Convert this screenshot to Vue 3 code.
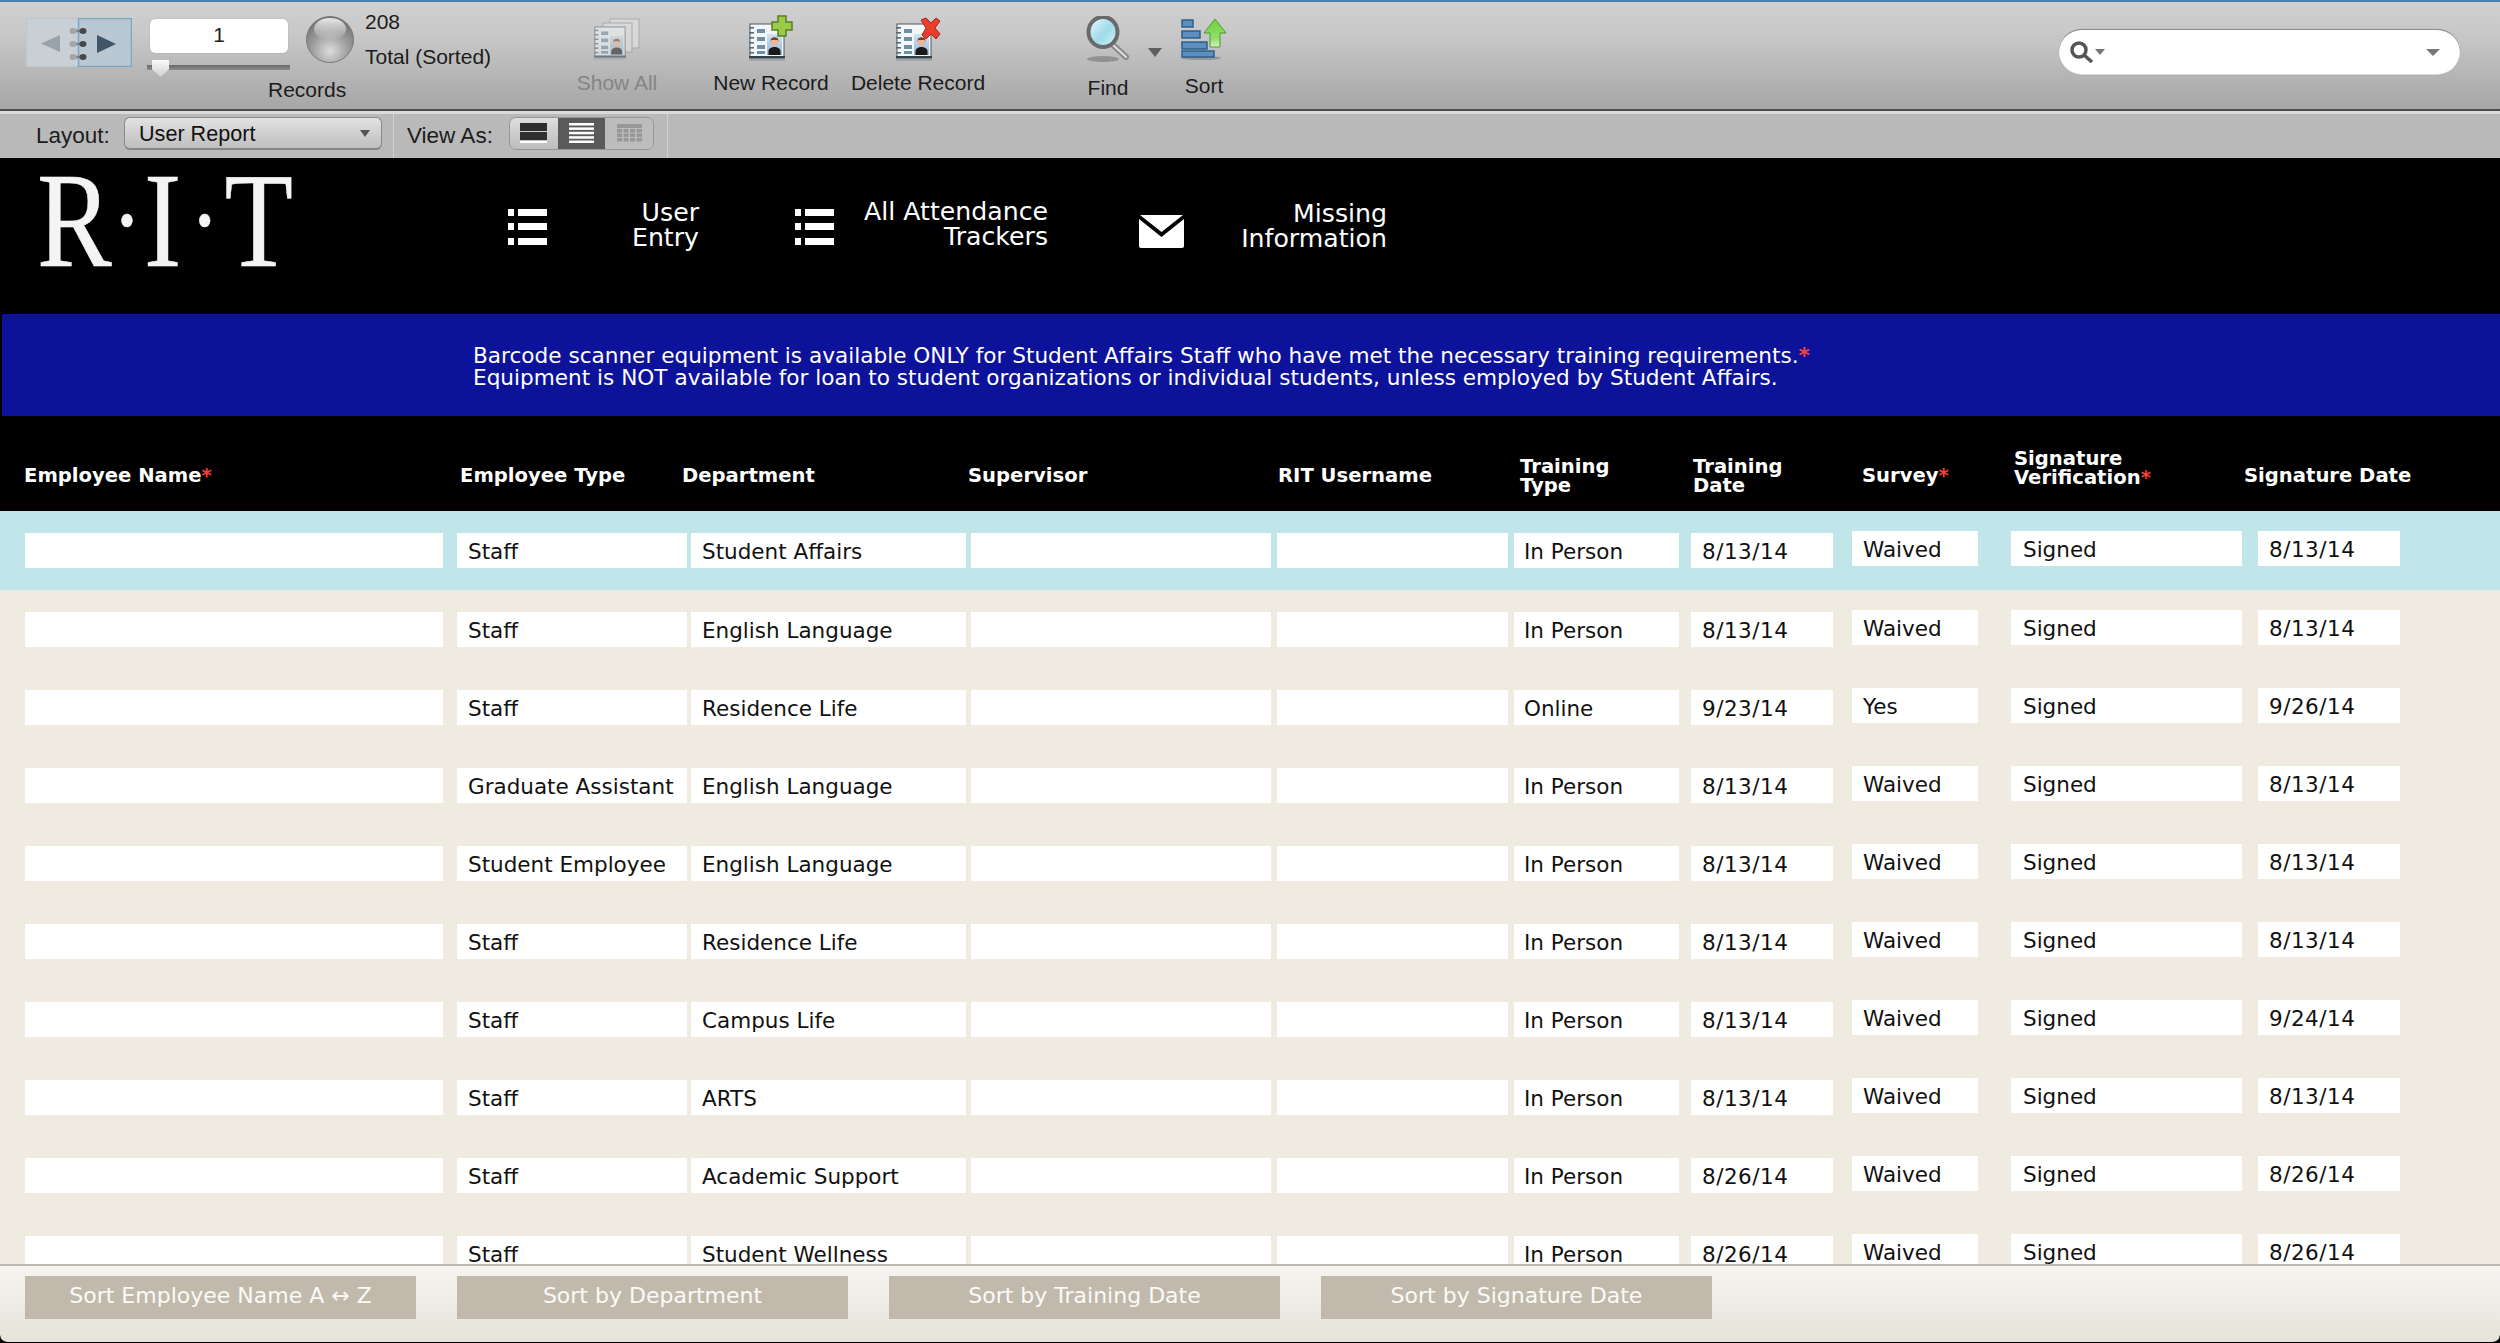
<script setup>
const headers = [
  { text: 'Employee Name', star: true, cls: 'h-one h-1' },
  { text: 'Employee Type', cls: 'h-one h-2' },
  { text: 'Department', cls: 'h-one h-3' },
  { text: 'Supervisor', cls: 'h-one h-4' },
  { text: 'RIT Username', cls: 'h-one h-5' },
  { text: 'Training Type', cls: 'h-two h-6' },
  { text: 'Training Date', cls: 'h-two h-7' },
  { text: 'Survey', star: true, cls: 'h-one h-8' },
  { text: 'Signature Verification', star: true, cls: 'h-top h-9' },
  { text: 'Signature Date', cls: 'h-one h-10' }
]

const rows = [
  ['Staff', 'Student Affairs', 'In Person', '8/13/14', 'Waived', 'Signed', '8/13/14'],
  ['Staff', 'English Language', 'In Person', '8/13/14', 'Waived', 'Signed', '8/13/14'],
  ['Staff', 'Residence Life', 'Online', '9/23/14', 'Yes', 'Signed', '9/26/14'],
  ['Graduate Assistant', 'English Language', 'In Person', '8/13/14', 'Waived', 'Signed', '8/13/14'],
  ['Student Employee', 'English Language', 'In Person', '8/13/14', 'Waived', 'Signed', '8/13/14'],
  ['Staff', 'Residence Life', 'In Person', '8/13/14', 'Waived', 'Signed', '8/13/14'],
  ['Staff', 'Campus Life', 'In Person', '8/13/14', 'Waived', 'Signed', '9/24/14'],
  ['Staff', 'ARTS', 'In Person', '8/13/14', 'Waived', 'Signed', '8/13/14'],
  ['Staff', 'Academic Support', 'In Person', '8/26/14', 'Waived', 'Signed', '8/26/14'],
  ['Staff', 'Student Wellness', 'In Person', '8/26/14', 'Waived', 'Signed', '8/26/14']
]

const sorts = ['Sort Employee Name A ↔ Z', 'Sort by Department', 'Sort by Training Date', 'Sort by Signature Date']
</script>

<template>
  <div class="app">
    <svg class="defs" width="0" height="0">
      <defs>
        <linearGradient id="photo" x1="0" y1="0" x2="0" y2="1">
          <stop offset="0" stop-color="#cfe3f2" />
          <stop offset="1" stop-color="#8fbbdc" />
        </linearGradient>
        <linearGradient id="lens" x1="0" y1="0" x2="1" y2="1">
          <stop offset="0" stop-color="#e8fbff" />
          <stop offset=".55" stop-color="#9fdbe8" />
          <stop offset="1" stop-color="#d9f4f8" />
        </linearGradient>
        <radialGradient id="ball" cx=".5" cy=".75" r=".75">
          <stop offset="0" stop-color="#dcdcdc" />
          <stop offset=".55" stop-color="#9a9a9a" />
          <stop offset="1" stop-color="#6e6e6e" />
        </radialGradient>
        <linearGradient id="ballTop" x1="0" y1="0" x2="0" y2="1">
          <stop offset="0" stop-color="#ffffff" stop-opacity=".85" />
          <stop offset="1" stop-color="#ffffff" stop-opacity="0" />
        </linearGradient>
        <linearGradient id="upArrow" x1="0" y1="0" x2="0" y2="1">
          <stop offset="0" stop-color="#6fd13a" />
          <stop offset=".7" stop-color="#8fe06a" />
          <stop offset="1" stop-color="#d8f0c8" />
        </linearGradient>
        <symbol id="card" viewBox="0 0 36 38">
          <rect x="0" y="34" width="36" height="4" fill="#8e9498" opacity=".55" />
          <rect x="1" y="1" width="34" height="34" fill="#f4f6f7" stroke="#4c5a64" stroke-width="1" />
          <rect x="0" y="33" width="36" height="2" fill="#34424c" />
          <g fill="#6d8fa8">
            <rect x="8" y="6" width="8" height="4" />
            <rect x="8" y="14" width="8" height="4" />
            <rect x="8" y="22" width="8" height="4" />
            <rect x="8" y="28" width="8" height="3" />
          </g>
          <g fill="#5a6a74">
            <rect x="0" y="4" width="5" height="1.6" />
            <rect x="0" y="9" width="5" height="1.6" />
            <rect x="0" y="14" width="5" height="1.6" />
            <rect x="0" y="19" width="5" height="1.6" />
            <rect x="0" y="24" width="5" height="1.6" />
            <rect x="0" y="29" width="5" height="1.6" />
          </g>
          <rect x="18" y="11" width="15" height="21" fill="url(#photo)" />
          <circle cx="25.5" cy="19" r="4" fill="#e9b79a" />
          <path d="M21.5 18.5a4 4.2 0 0 1 8 0l-1-1.5h-6z" fill="#8a3b1c" />
          <path d="M19.5 32v-3.5c0-3 3-4.5 6-4.500s6 1.500 6 4.500V32z" fill="#1a1a1a" />
        </symbol>
      </defs>
    </svg>

    <header class="topline"></header>
    <section class="toolbar">
      <svg class="book" width="106" height="49" viewBox="0 0 106 49">
        <rect x=".5" y=".5" width="52" height="48" fill="#c8d0d5" stroke="#bcc7ce" />
        <rect x="52.500" y=".5" width="53" height="48" fill="#b8c7d2" stroke="#7ba6c6" stroke-width="1.500" />
        <path d="M34 17v17L15 25.500z" fill="#98a2a8" />
        <path d="M71 17v18L90 26z" fill="#3f5568" />
        <g>
          <g stroke="#7d8184" stroke-width="2.500">
            <path d="M47 13h9M47 26h9M47 39h9" />
          </g>
          <g fill="#a2a6a8">
            <ellipse cx="47" cy="13" rx="3.500" ry="3" />
            <ellipse cx="47" cy="26" rx="3.500" ry="3" />
            <ellipse cx="47" cy="39" rx="3.500" ry="3" />
          </g>
          <g fill="#45494c">
            <ellipse cx="57" cy="13" rx="3.500" ry="3" />
            <ellipse cx="57" cy="26" rx="3.500" ry="3" />
            <ellipse cx="57" cy="39" rx="3.500" ry="3" />
          </g>
        </g>
      </svg>

      <div class="records">
        <div class="rec-top">
          <div class="rec-left">
            <div class="rec-input">1</div>
            <div class="slider"><span class="thumb"></span></div>
          </div>
          <svg class="pie" width="48" height="47" viewBox="0 0 48 47">
            <ellipse cx="24" cy="23.500" rx="23.500" ry="23" fill="url(#ball)" stroke="#7a7a7a" />
            <ellipse cx="24" cy="13" rx="16" ry="11" fill="url(#ballTop)" />
          </svg>
          <div class="counts">
            <div>208</div>
            <div class="total">Total (Sorted)</div>
          </div>
        </div>
        <div class="rec-label">Records</div>
      </div>

      <div class="tool tool-showall">
        <svg class="icon" width="46" height="42" viewBox="0 0 46 42">
          <g opacity=".55">
            <rect x="16" y="1" width="29" height="29" fill="#e6e6e6" stroke="#8d9498" />
            <rect x="9" y="5" width="29" height="29" fill="#e6e6e6" stroke="#8d9498" />
            <use href="#card" x="0" y="8" width="32" height="34" />
          </g>
        </svg>
        <span class="label off">Show All</span>
      </div>

      <div class="tool tool-new">
        <svg class="icon" width="44" height="46" viewBox="0 0 44 46">
          <use href="#card" x="0" y="8" width="36" height="38" />
          <path d="M29 1h8v6h6v8h-6v6h-8v-6h-6V7h6z" fill="#9ccb4a" stroke="#55801f" stroke-width="1.500" />
        </svg>
        <span class="label">New Record</span>
      </div>

      <div class="tool tool-delete">
        <svg class="icon" width="45" height="44" viewBox="0 0 45 44">
          <use href="#card" x="0" y="6" width="36" height="38" />
          <path d="M25 3l5-2 5 5 5-5 4 3-5 7 5 6-4 5-5-5-5 5-4-4 4-7z" fill="#ea3d2e" stroke="#a9261b" stroke-width="1" />
        </svg>
        <span class="label">Delete Record</span>
      </div>

      <div class="tool tool-find">
        <svg class="icon" width="44" height="46" viewBox="0 0 44 46">
          <ellipse cx="17" cy="43" rx="16" ry="3" fill="#6e6e6e" opacity=".55" />
          <path d="M26 28l14 13" stroke="#8a8a8a" stroke-width="6" stroke-linecap="round" />
          <path d="M26 28l14 13" stroke="#dedede" stroke-width="2" stroke-linecap="round" />
          <ellipse cx="17" cy="16" rx="14.500" ry="15" fill="url(#lens)" stroke="#6a6a6a" stroke-width="4" />
        </svg>
        <span class="label">Find</span>
      </div>
      <span class="find-arrow"></span>

      <div class="tool tool-sort">
        <svg class="icon" width="46" height="42" viewBox="0 0 46 42">
          <ellipse cx="20" cy="40" rx="20" ry="2" fill="#6e6e6e" opacity=".5" />
          <g fill="#5b8fbf" stroke="#2c5f8c" stroke-width="1.500">
            <rect x="1" y="2" width="11" height="7" />
            <rect x="1" y="13" width="18" height="7" />
            <rect x="1" y="24" width="25" height="7" />
            <rect x="1" y="33" width="32" height="6" />
          </g>
          <path d="M34 1l11 14h-6v14h-10V15h-6z" fill="url(#upArrow)" stroke="#4f9a2a" stroke-width="1" />
        </svg>
        <span class="label">Sort</span>
      </div>

      <div class="search">
        <svg width="36" height="22" viewBox="0 0 36 22">
          <circle cx="9" cy="9" r="7" fill="none" stroke="#555" stroke-width="3.500" />
          <path d="M14 14l8 7" stroke="#555" stroke-width="3.500" />
          <path d="M25 8h10l-5 6z" fill="#777" />
        </svg>
        <span class="search-arrow"></span>
      </div>
    </section>

    <section class="layoutbar">
      <div class="lay-group">
        <span class="lay-label">Layout:</span>
        <div class="select">
          <span>User Report</span>
          <span class="select-arrow"></span>
        </div>
      </div>
      <div class="view-group">
        <span class="view-label">View As:</span>
        <div class="seg">
          <span class="seg-btn">
            <svg width="27" height="20" viewBox="0 0 27 20">
              <rect x="0" y="0" width="27" height="8" fill="#2e2e2e" />
              <rect x="0" y="9" width="27" height="8" fill="#2e2e2e" />
              <rect x="0" y="18" width="27" height="2" fill="#fff" />
            </svg>
          </span>
          <span class="seg-btn active">
            <svg width="25" height="20" viewBox="0 0 25 20">
              <g fill="#fff">
                <rect y="0" width="25" height="2.500" />
                <rect y="4.400" width="25" height="2.500" />
                <rect y="8.800" width="25" height="2.500" />
                <rect y="13.200" width="25" height="2.500" />
                <rect y="17.500" width="25" height="2.500" />
              </g>
            </svg>
          </span>
          <span class="seg-btn faded">
            <svg width="25" height="18" viewBox="0 0 25 18">
              <rect width="25" height="4" fill="#979797" />
              <g fill="#979797">
                <rect y="5" width="5" height="3.500" /><rect x="6.500" y="5" width="5" height="3.500" /><rect x="13" y="5" width="5" height="3.500" /><rect x="19.500" y="5" width="5.500" height="3.500" />
                <rect y="9.500" width="5" height="3.500" /><rect x="6.500" y="9.500" width="5" height="3.500" /><rect x="13" y="9.500" width="5" height="3.500" /><rect x="19.500" y="9.500" width="5.500" height="3.500" />
                <rect y="14" width="5" height="3.500" /><rect x="6.500" y="14" width="5" height="3.500" /><rect x="13" y="14" width="5" height="3.500" /><rect x="19.500" y="14" width="5.500" height="3.500" />
              </g>
            </svg>
          </span>
        </div>
      </div>
    </section>

    <section class="brand">
      <div class="logo-wrap">
        <div class="logo">
          <span class="l-r">R</span><span class="l-dot d1">·</span><span class="l-i">I</span><span class="l-dot d2">·</span><span class="l-t">T</span>
        </div>
      </div>
      <div class="nav nav-user">
        <svg class="ico-list" width="39" height="36" viewBox="0 0 39 36">
          <g fill="#fff">
            <rect width="6" height="7" /><rect x="10" width="29" height="7" />
            <rect y="14" width="6" height="7" /><rect x="10" y="14" width="29" height="7" />
            <rect y="29" width="6" height="7" /><rect x="10" y="29" width="29" height="7" />
          </g>
        </svg>
        <div class="nav-text t-user">User<br />Entry</div>
      </div>
      <div class="nav nav-all">
        <svg class="ico-list" width="39" height="36" viewBox="0 0 39 36">
          <g fill="#fff">
            <rect width="6" height="7" /><rect x="10" width="29" height="7" />
            <rect y="14" width="6" height="7" /><rect x="10" y="14" width="29" height="7" />
            <rect y="29" width="6" height="7" /><rect x="10" y="29" width="29" height="7" />
          </g>
        </svg>
        <div class="nav-text t-all">All Attendance<br />Trackers</div>
      </div>
      <div class="nav nav-miss">
        <svg class="ico-mail" width="45" height="33" viewBox="0 0 45 33">
          <path d="M1 0h43L22.500 17z" fill="#fff" />
          <path d="M0 4l22.500 18L45 4v27a2 2 0 0 1-2 2H2a2 2 0 0 1-2-2z" fill="#fff" />
        </svg>
        <div class="nav-text t-miss">Missing<br />Information</div>
      </div>
    </section>

    <section class="banner">
      <p>Barcode scanner equipment is available ONLY for Student Affairs Staff who have met the necessary training requirements.<span class="star">*</span></p>
      <p>Equipment is NOT available for loan to student organizations or individual students, unless employed by Student Affairs.</p>
    </section>

    <section class="thead">
      <div v-for="h in headers" :key="h.text" class="th" :class="h.cls">
        {{ h.text }}<span v-if="h.star" class="star">*</span>
      </div>
    </section>

    <main class="tbody">
      <div v-for="(r, i) in rows" :key="i" class="row" :class="{ selected: i === 0 }">
        <div class="f c-name"></div>
        <div class="f c-type">{{ r[0] }}</div>
        <div class="f c-dept">{{ r[1] }}</div>
        <div class="f c-sup"></div>
        <div class="f c-user"></div>
        <div class="f c-ttype">{{ r[2] }}</div>
        <div class="f date c-tdate">{{ r[3] }}</div>
        <div class="f up c-survey">{{ r[4] }}</div>
        <div class="f up c-sig">{{ r[5] }}</div>
        <div class="f up date c-sdate">{{ r[6] }}</div>
      </div>
    </main>

    <footer class="footer">
      <button v-for="s in sorts" :key="s" class="sort-btn">{{ s }}</button>
    </footer>
  </div>
</template>

<style>
html, body { margin: 0; padding: 0; background: #000; overflow: hidden; }
</style>

<style scoped>
.app {
  width: 2500px;
  height: 1343px;
  display: flex;
  flex-direction: column;
  background: #000;
  overflow: hidden;
  font-family: "DejaVu Sans", Verdana, sans-serif;
}
.defs { position: absolute; }

.topline { height: 2px; background: #4a80aa; flex: none; }
.toolbar {
  flex: none;
  display: flex;
  align-items: flex-start;
  padding-left: 26px;
  box-sizing: border-box;
  border-bottom: 2px solid #4a4a4a;
  height: 109px;
  background: linear-gradient(#d0d0d0, #c8c8c8 30%, #a6a6a6);
  font-family: "Liberation Sans", Arial, sans-serif;
  font-size: 21px;
  color: #1c1c1c;
}
.book { margin-top: 16px; flex: none; }

.records { margin-left: 15px; width: 385px; flex: none; }
.rec-top { display: flex; align-items: flex-start; }
.rec-left { width: 143px; margin-top: 17px; }
.rec-input {
  margin-left: 3px;
  width: 138px;
  height: 34px;
  background: #fff;
  border-radius: 5px;
  text-align: center;
  line-height: 32px;
  font-size: 21px;
  box-shadow: 0 0 1px #777;
}
.slider {
  margin-top: 12px;
  height: 5px;
  background: linear-gradient(#6a6a6a, #8b8b8b);
  display: flex;
  position: relative;
}
.thumb {
  position: absolute;
  left: 5px;
  top: -5px;
  width: 17px;
  height: 17px;
  background: linear-gradient(#fafafa, #cfcfcf);
  clip-path: polygon(0 0, 100% 0, 100% 55%, 50% 100%, 0 55%);
}
.pie { margin: 14px 0 0 16px; flex: none; }
.counts { margin: 8px 0 0 11px; line-height: 24px; white-space: nowrap; }
.total { margin-top: 11px; }
.rec-label { margin: 8px 0 0 121px; line-height: 24px; }

.tool { display: flex; flex-direction: column; align-items: center; flex: none; position: relative; }
.label { white-space: nowrap; line-height: 24px; }
.label.off { color: #858585; }
.icon { display: block; }
.tool-showall { width: 140px; margin-left: 15px; padding-top: 16px; }
.tool-showall .label { margin-top: 11px; }
.tool-new { width: 140px; margin-left: 14px; padding-top: 13px; }
.tool-new .label { margin-top: 10px; }
.tool-delete { width: 140px; margin-left: 7px; padding-top: 15px; }
.tool-delete .label { margin-top: 10px; }
.tool-find { width: 60px; margin-left: 90px; padding-top: 14px; }
.tool-find .label { margin-top: 14px; }
.find-arrow {
  margin: 46px 0 0 10px;
  width: 0; height: 0;
  border-left: 7px solid transparent;
  border-right: 7px solid transparent;
  border-top: 9px solid #5f5f5f;
  flex: none;
}
.tool-sort { width: 60px; margin-left: 12px; padding-top: 16px; }
.tool-sort .label { margin-top: 14px; }

.search {
  margin-left: 825px;
  margin-top: 27px;
  width: 401px;
  height: 46px;
  box-sizing: border-box;
  padding: 0 20px 0 11px;
  background: #fff;
  border-radius: 23px;
  border-top: 1px solid #8d8d8d;
  border-bottom: 1px solid #dadada;
  box-shadow: 0 0 1px #888;
  display: flex;
  align-items: center;
  justify-content: space-between;
  flex: none;
}
.search-arrow {
  width: 0; height: 0;
  border-left: 7px solid transparent;
  border-right: 7px solid transparent;
  border-top: 7px solid #777;
}

.layoutbar {
  height: 47px;
  flex: none;
  box-sizing: border-box;
  border-top: 3px solid #dcdad8;
  background: #b9b9b9;
  display: flex;
  font-family: "Liberation Sans", Arial, sans-serif;
  color: #1c1c1c;
}
.lay-group {
  width: 394px;
  box-sizing: border-box;
  padding-left: 36px;
  display: flex;
  align-items: center;
  border-right: 1px solid #cfcfcf;
  flex: none;
}
.lay-label { font-size: 22.500px; width: 88px; }
.select {
  width: 258px;
  height: 33px;
  box-sizing: border-box;
  padding: 1px 11px 0 14px;
  margin-bottom: 5px;
  border-radius: 6px;
  border: 1px solid #8a8a8a;
  border-bottom: 2px solid #858585;
  background: linear-gradient(#e2e2e2, #bfbfbf);
  display: flex;
  align-items: center;
  justify-content: space-between;
  font-size: 21.600px;
  color: #111;
}
.select-arrow {
  width: 0; height: 0;
  border-left: 5px solid transparent;
  border-right: 5px solid transparent;
  border-top: 7px solid #555;
}
.view-group {
  width: 274px;
  box-sizing: border-box;
  padding-left: 13px;
  display: flex;
  align-items: center;
  border-right: 1px solid #cfcfcf;
  flex: none;
}
.view-label { font-size: 22.500px; width: 102px; }
.seg {
  display: flex;
  width: 145px;
  height: 33px;
  margin-bottom: 6px;
  border-radius: 7px;
  overflow: hidden;
  border: 1px solid #969696;
  box-sizing: border-box;
  flex: none;
}
.seg-btn {
  flex: 1;
  display: flex;
  align-items: center;
  justify-content: center;
  background: linear-gradient(#dedede, #bcbcbc);
}
.seg-btn.active { background: #5a5a5a; }
.seg-btn.faded { background: #bcbcbc; }

.brand { height: 156px; flex: none; background: #000; display: flex; align-items: flex-start; color: #fff; }
.logo-wrap { width: 508px; flex: none; box-sizing: border-box; padding: 18px 0 0 37px; }
.logo {
  font-family: "Liberation Serif", "Times New Roman", serif;
  font-size: 135px;
  line-height: 89px;
  color: #f4f4f4;
  white-space: nowrap;
  transform-origin: left top;
  transform: scaleX(.83);
  display: flex;
  -webkit-text-stroke: .5px #f4f4f4;
}
.l-dot { text-align: center; font-size: 110px; }
.d1 { width: 28px; margin-right: 11px; }
.d2 { width: 42px; margin: 0 3px 0 7px; }
.nav { display: flex; align-items: flex-start; flex: none; }
.ico-list { margin-top: 51px; flex: none; }
.ico-mail { margin-top: 57px; flex: none; }
.nav-text { font-size: 25.200px; line-height: 25px; text-align: right; }
.t-user { width: 152px; margin-top: 42px; }
.t-all { width: 214px; margin-top: 41px; }
.t-miss { width: 203px; margin-top: 43px; }
.nav-all { margin-left: 96px; }
.nav-miss { margin-left: 91px; }

.banner {
  height: 102px;
  flex: none;
  margin-left: 2px;
  box-sizing: border-box;
  padding: 31px 0 0 471px;
  background: #0d129a;
  color: #fff;
  font-size: 21.600px;
  line-height: 22px;
}
.banner p { margin: 0; white-space: nowrap; }
.star { color: #f8403a; font-weight: 700; }

.thead {
  height: 95px;
  flex: none;
  background: #000;
  display: grid;
  grid-template-columns: 436px 222px 286px 310px 242px 173px 169px 152px 230px 1fr;
  padding-left: 24px;
  color: #fff;
  font-weight: 700;
  font-size: 19.600px;
  line-height: 19px;
  align-items: start;
}
.th { box-sizing: border-box; }
.h-one { margin-top: 50px; white-space: nowrap; }
.h-two { margin-top: 41px; width: 110px; }
.h-top { margin-top: 33px; width: 180px; }

.tbody { flex: 1; min-height: 0; overflow: hidden; background: #f0ebe1; }
.row {
  height: 78px;
  box-sizing: border-box;
  padding: 20px 0 0 25px;
  display: flex;
  align-items: flex-start;
}
.row:first-child { height: 79px; }
.row.selected { background: #c1e6e9; }
.f {
  height: 35px;
  margin-top: 2px;
  flex: none;
  box-sizing: border-box;
  padding-left: 11px;
  background: #fff;
  color: #111;
  font-size: 21.500px;
  line-height: 37px;
  white-space: nowrap;
  overflow: hidden;
}
.f.up { margin-top: 0; line-height: 37px; }
.f.date { letter-spacing: .5px; }
.c-name { width: 418px; }
.c-type { width: 230px; margin-left: 14px; }
.c-dept { width: 275px; margin-left: 4px; padding-left: 11px; }
.c-sup { width: 300px; margin-left: 5px; }
.c-user { width: 231px; margin-left: 6px; }
.c-ttype { width: 165px; margin-left: 6px; padding-left: 10px; }
.c-tdate { width: 142px; margin-left: 12px; }
.c-survey { width: 126px; margin-left: 19px; }
.c-sig { width: 231px; margin-left: 33px; padding-left: 12px; }
.c-sdate { width: 142px; margin-left: 16px; }

.footer {
  height: 79px;
  flex: none;
  box-sizing: border-box;
  border-top: 2px solid #bdb9b0;
  border-bottom: 1px solid #000;
  border-radius: 0 0 8px 8px;
  background: linear-gradient(#f6f4f0, #e6e3da);
  padding: 10px 0 0 25px;
  display: flex;
  gap: 41px;
  align-items: flex-start;
}
.sort-btn {
  width: 391px;
  height: 43px;
  border: 0;
  padding: 0 0 3px;
  background: #c2b9ad;
  color: #fbfaf6;
  font-family: inherit;
  font-size: 22px;
  line-height: 40px;
}
</style>
